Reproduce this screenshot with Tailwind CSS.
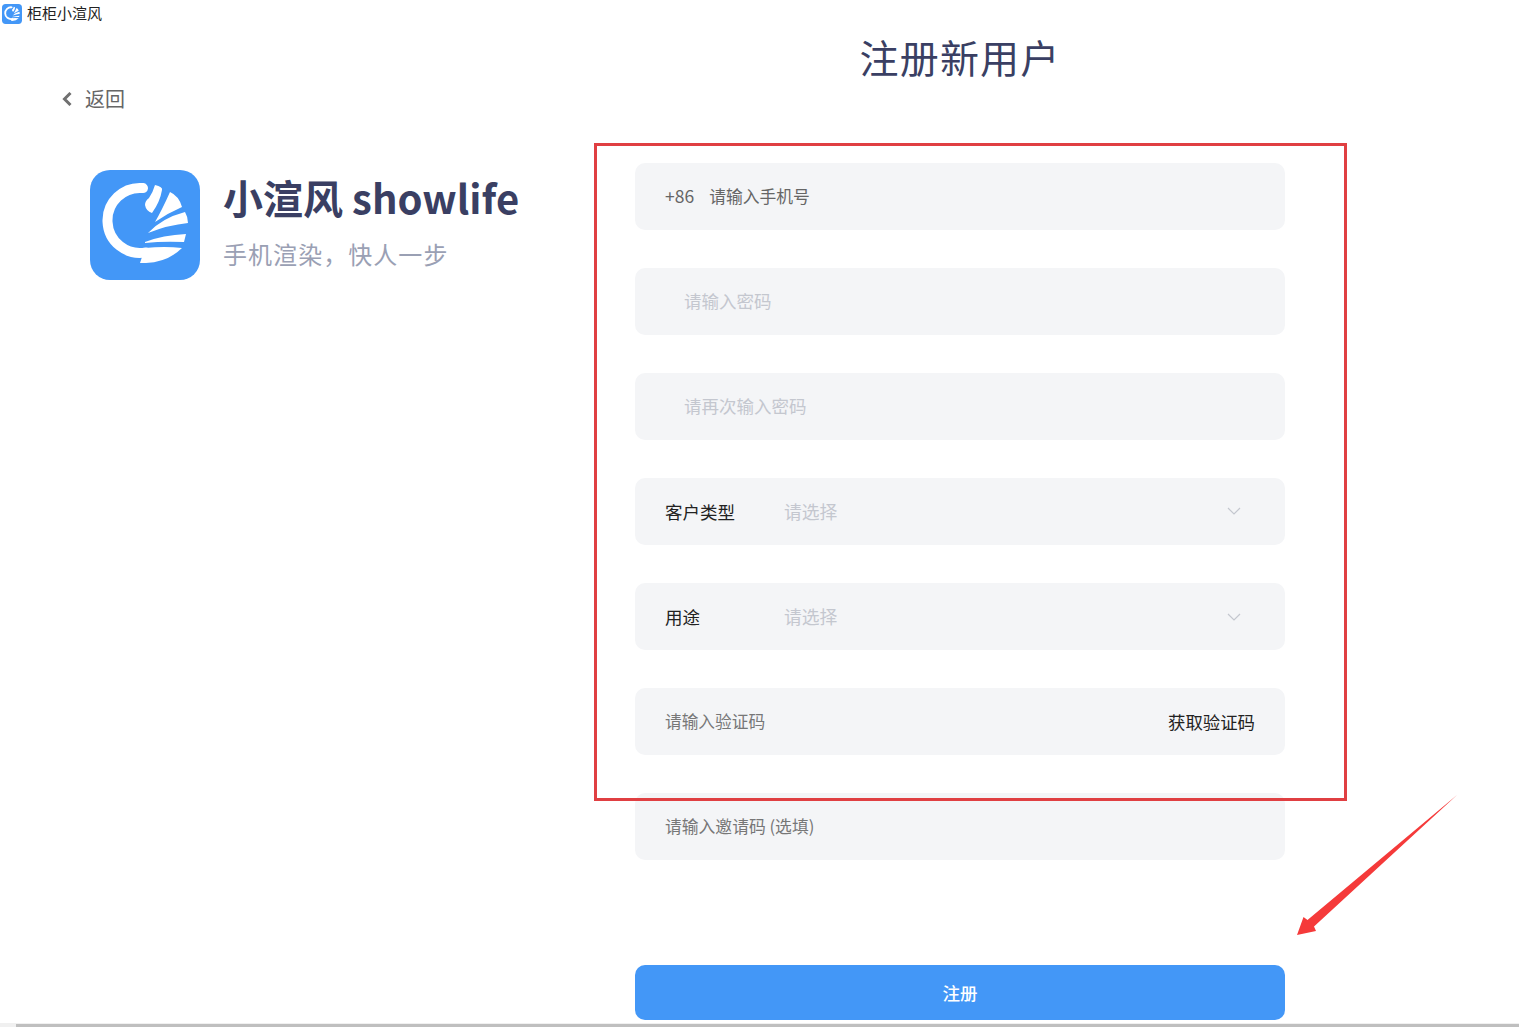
<!DOCTYPE html>
<html lang="zh-CN">
<head>
  <meta charset="UTF-8">
  <title>柜柜小渲风</title>
  <script src="https://cdn.jsdelivr.net/npm/@tailwindcss/browser@4"></script>
</head>
<body class="relative h-screen overflow-hidden bg-white font-['Noto_Sans_CJK_SC','Noto_Sans',sans-serif]">
  <!-- Title bar -->
  <div class="flex h-[27px] items-center pl-[2px] text-[15px] text-[#222]">
    <svg class="mr-[5px] h-[20px] w-[20px]" viewBox="0 0 110 110">
      <rect width="110" height="110" rx="20" fill="#4397f7"/>
      <path d="M53 18.100A32.500 32.500 0 1 0 56 82.400" fill="none" stroke="#fff" stroke-width="10" stroke-linecap="round"/>
      <path d="M65 15Q73 17 72 20Q70 32 62 43Q56 41 55 35Q55 31 59 28Q63 22 65 15Z" fill="#fff"/>
      <path d="M65 52Q72 40 80 22Q89 26 92 37Q78 43 65 52Z" fill="#fff"/>
      <path d="M58 63Q72 48 95 42Q98 47 98 53Q78 55 58 63Z" fill="#fff"/>
      <path d="M55 72Q73 65 96 64L94 72Q73 71 55 73Z" fill="#fff"/>
      <path d="M55 78Q75 76 92 78Q78 92 56 93L50 93Z" fill="#fff"/>
    </svg>
    <span>柜柜小渲风</span>
  </div>

  <div class="flex">
    <!-- Left column -->
    <div class="w-[635px] shrink-0">
      <a class="ml-[62px] mt-[58px] flex h-[28px] items-center text-[#666]">
        <svg class="mr-[12px] h-[14px] w-[11px]" viewBox="0 0 11 14"><path d="M8.500 1L2.500 7l6 6" fill="none" stroke="#707070" stroke-width="3"/></svg>
        <span class="text-[20px]">返回</span>
      </a>
      <div class="ml-[90px] mt-[57px] flex">
        <svg class="h-[110px] w-[110px] shrink-0" viewBox="0 0 110 110">
          <rect width="110" height="110" rx="20" fill="#4397f7"/>
          <path d="M53 18.100A32.500 32.500 0 1 0 56 82.400" fill="none" stroke="#fff" stroke-width="10" stroke-linecap="round"/>
          <path d="M65 15Q73 17 72 20Q70 32 62 43Q56 41 55 35Q55 31 59 28Q63 22 65 15Z" fill="#fff"/>
          <path d="M65 52Q72 40 80 22Q89 26 92 37Q78 43 65 52Z" fill="#fff"/>
          <path d="M58 63Q72 48 95 42Q98 47 98 53Q78 55 58 63Z" fill="#fff"/>
          <path d="M55 72Q73 65 96 64L94 72Q73 71 55 73Z" fill="#fff"/>
          <path d="M55 78Q75 76 92 78Q78 92 56 93L50 93Z" fill="#fff"/>
        </svg>
        <div class="ml-[23px]">
          <h2 class="text-[40px] leading-[54px] font-bold text-[#3a3f63]">小渲风 showlife</h2>
          <p class="mt-[12px] text-[24px] leading-[36px] tracking-[1.050px] text-[#9aa0b4]">手机渲染，快人一步</p>
        </div>
      </div>
    </div>

    <!-- Register form -->
    <div class="w-[650px] shrink-0">
      <h1 class="text-center text-[39px] leading-[58px] tracking-[1.200px] text-[#3a3f63]">注册新用户</h1>
      <div class="mt-[78px] flex flex-col gap-[38px]">
        <div class="flex h-[67px] items-center rounded-[10px] bg-[#f4f5f7] pl-[30px] text-[#666]">
          <span class="mr-[15px] text-[17.500px]">+86</span><span class="text-[16.800px]">请输入手机号</span>
        </div>
        <div class="flex h-[67px] items-center rounded-[10px] bg-[#f4f5f7] pl-[49px] text-[17.500px] text-[#c4c7cf]">请输入密码</div>
        <div class="flex h-[67px] items-center rounded-[10px] bg-[#f4f5f7] pl-[49px] text-[17.500px] text-[#c4c7cf]">请再次输入密码</div>
        <div class="flex h-[67px] items-center rounded-[10px] bg-[#f4f5f7] pl-[30px] pr-[44px]">
          <span class="w-[119px] pt-[2px] text-[17.500px] text-[#222]">客户类型</span>
          <span class="flex-1 text-[17.800px] text-[#c4c7cf]">请选择</span>
          <svg class="mb-[2px] h-[14px] w-[14px]" viewBox="0 0 14 14"><path d="M1 4l6 6 6-6" fill="none" stroke="#c4c7cf" stroke-width="1.200"/></svg>
        </div>
        <div class="flex h-[67px] items-center rounded-[10px] bg-[#f4f5f7] pl-[30px] pr-[44px]">
          <span class="w-[119px] pt-[2px] text-[17.500px] text-[#222]">用途</span>
          <span class="flex-1 text-[17.800px] text-[#c4c7cf]">请选择</span>
          <svg class="h-[14px] w-[14px]" viewBox="0 0 14 14"><path d="M1 4l6 6 6-6" fill="none" stroke="#c4c7cf" stroke-width="1.200"/></svg>
        </div>
        <div class="flex h-[67px] items-center justify-between rounded-[10px] bg-[#f4f5f7] px-[30px]">
          <span class="text-[16.700px] text-[#777]">请输入验证码</span>
          <span class="pt-[1px] text-[17.400px] text-[#222]">获取验证码</span>
        </div>
        <div class="flex h-[67px] items-center rounded-[10px] bg-[#f4f5f7] pl-[30px] text-[16.800px] text-[#777]">请输入邀请码 (选填)</div>
      </div>
      <button class="mt-[105px] h-[55px] w-full rounded-[10px] bg-[#4397f7] pt-[2px] text-[17.500px] font-medium text-white">注册</button>
    </div>
  </div>

  <!-- Annotation overlay -->
  <div class="absolute left-[594px] top-[143px] h-[658px] w-[753px] border-[3px] border-[#e03f42]"></div>
  <svg class="absolute left-[1290px] top-[790px] h-[150px] w-[170px]" viewBox="0 0 170 150">
    <path d="M167 5L24 136.500L26 141L7 145L13.500 127L17.500 130Z" fill="#f53a3a"/>
  </svg>

  <!-- Horizontal scrollbar -->
  <div class="absolute bottom-0 left-0 flex h-[4px] w-full bg-[#f0f0f0]"><div class="ml-[16px] mt-[1px] h-[3px] flex-1 bg-[#bfbfbf]"></div></div>
</body>
</html>
